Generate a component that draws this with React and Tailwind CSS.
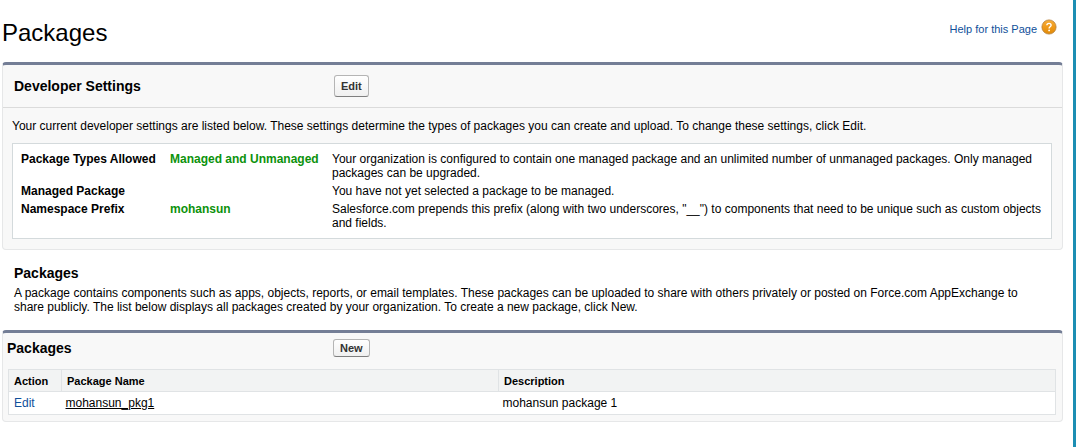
const settings = [
  {
    label: 'Package Types Allowed',
    value: 'Managed and Unmanaged',
    text: 'Your organization is configured to contain one managed package and an unlimited number of unmanaged packages. Only managed packages can be upgraded.',
  },
  {
    label: 'Managed Package',
    value: '',
    text: 'You have not yet selected a package to be managed.',
  },
  {
    label: 'Namespace Prefix',
    value: 'mohansun',
    text: 'Salesforce.com prepends this prefix (along with two underscores, "__") to components that need to be unique such as custom objects and fields.',
  },
];

const packages = [{ name: 'mohansun_pkg1', description: 'mohansun package 1' }];

function HelpIcon() {
  return (
    <svg className="size-4" viewBox="0 0 16 16" aria-hidden="true">
      <defs>
        <linearGradient id="help-fill" x1="0" y1="0" x2="0" y2="1">
          <stop offset="0" stopColor="#f5ad3a" />
          <stop offset="0.5" stopColor="#f09a1a" />
          <stop offset="1" stopColor="#e08a08" />
        </linearGradient>
      </defs>
      <circle cx="8" cy="8" r="7.1" fill="url(#help-fill)" stroke="#b5803a" strokeWidth="0.8" />
      <path
        d="M5.9 6.2C5.9 5 6.8 4.4 8 4.4s2.1.7 2.1 1.8c0 1.5-2 1.6-2 3.2"
        fill="none"
        stroke="#fff"
        strokeWidth="1.4"
      />
      <circle cx="8.1" cy="11.4" r="0.9" fill="#fff" />
    </svg>
  );
}

function Panel({ children }) {
  return (
    <section className="rounded border border-t-[3px] border-[#e6e7e8] border-t-[#747e96] bg-[#f8f8f8]">
      {children}
    </section>
  );
}

function Button({ children, className }) {
  return (
    <button
      type="button"
      className={`rounded-[3px] border border-[#b5b5b5] border-b-[#7f7f7f] bg-linear-to-b from-white to-[#f0f0f0] px-[6px] text-[11px] leading-4 font-bold text-[#333] ${className}`}
    >
      {children}
    </button>
  );
}

export default function App() {
  return (
    <div className="min-h-screen border-r-[3px] border-[#1d8eb3] bg-white pr-[10px] pl-[2px] font-['Liberation_Sans',Arial,sans-serif] text-[12px] leading-[14px] text-black">
      <header className="flex h-[62px] items-start justify-between pt-[18px] pr-[6px]">
        <h1 className="text-[24px] leading-[30px]">Packages</h1>
        <a href="#help" className="flex items-center gap-1 text-[11px] text-[#10509a]">
          <span className="pt-1">Help for this Page</span>
          <HelpIcon />
        </a>
      </header>

      <main>
        <Panel>
          <div className="flex h-[43px] items-center border-b border-[#dbdbdb] pl-[11px]">
            <h2 className="w-[320px] text-[14px] leading-4 font-bold">Developer Settings</h2>
            <Button className="py-[2px]">Edit</Button>
          </div>
          <div className="pt-[11px] pr-[10px] pb-[10px] pl-[9px]">
            <p className="mb-[10px]">
              Your current developer settings are listed below. These settings determine the types of packages you can
              create and upload. To change these settings, click Edit.
            </p>
            <div className="border border-[#d4dadc] bg-white px-2 py-[6px]">
              <table className="w-full table-fixed">
                <tbody>
                  {settings.map((s) => (
                    <tr key={s.label} className="align-top">
                      <th scope="row" className="w-[149px] py-[2px] text-left font-bold">
                        {s.label}
                      </th>
                      <td className="w-[162px] py-[2px] font-bold text-[#0c920c]">{s.value}</td>
                      <td className="py-[2px]">{s.text}</td>
                    </tr>
                  ))}
                </tbody>
              </table>
            </div>
          </div>
        </Panel>

        <div className="pt-[15px] pr-4 pb-4 pl-3">
          <h2 className="mb-[5px] text-[14px] leading-4 font-bold">Packages</h2>
          <p>
            A package contains components such as apps, objects, reports, or email templates. These packages can be
            uploaded to share with others privately or posted on Force.com AppExchange to share publicly. The list below
            displays all packages created by your organization. To create a new package, click New.
          </p>
        </div>

        <Panel>
          <div className="flex h-9 items-center pb-[6px] pl-1">
            <h2 className="w-[326px] text-[14px] leading-4 font-bold">Packages</h2>
            <Button>New</Button>
          </div>
          <div className="pr-[6px] pb-[6px] pl-[5px]">
            <table className="w-full table-fixed border-collapse border border-[#e0e3e5] bg-white text-left">
              <thead>
                <tr className="h-[22px] bg-[#f2f3f3] text-[11px]">
                  <th className="w-[53px] border border-[#e0e3e5] px-[5px]">Action</th>
                  <th className="w-[437px] border border-[#e0e3e5] px-[5px]">Package Name</th>
                  <th className="border border-[#e0e3e5] px-[5px]">Description</th>
                </tr>
              </thead>
              <tbody>
                {packages.map((p) => (
                  <tr key={p.name} className="h-[23px]">
                    <td className="px-[5px]">
                      <a href="#edit" className="text-[#10509a]">
                        Edit
                      </a>
                    </td>
                    <td className="px-1">
                      <a href="#package" className="underline">
                        {p.name}
                      </a>
                    </td>
                    <td className="px-1">{p.description}</td>
                  </tr>
                ))}
              </tbody>
            </table>
          </div>
        </Panel>
      </main>
    </div>
  );
}
